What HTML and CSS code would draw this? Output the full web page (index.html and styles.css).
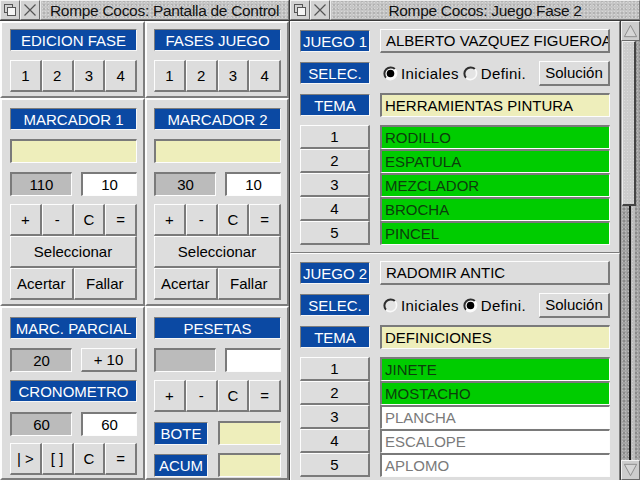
FILE: index.html
```html
<!DOCTYPE html>
<html lang="es">
<head>
<meta charset="utf-8">
<title>Rompe Cocos</title>
<link rel="stylesheet" href="styles.css">
</head>
<body>
<div class="desk">
  <section class="win win-left">
    <header class="titlebar">
      <span class="ticon"><svg width="18" height="18" viewBox="0 0 18 18"><rect x="3.5" y="3.5" width="8" height="8" fill="none" stroke="#555"/><rect x="6.5" y="6.5" width="8" height="8" fill="#f4f4f4" stroke="#555"/></svg></span>
      <span class="ticon"><svg width="18" height="18" viewBox="0 0 18 18"><path d="M3.5 3.5 L14.5 14.5 M14.5 3.5 L3.5 14.5" stroke="#555" stroke-width="1.2"/></svg></span>
      <span class="title">Rompe Cocos: Pantalla de Control</span>
    </header>
    <main class="control">
      <div class="cell r1 cl">
        <div class="label">EDICION FASE</div>
        <div class="btnrow mt9"><button class="btn">1</button><button class="btn">2</button><button class="btn">3</button><button class="btn">4</button></div>
      </div>
      <div class="cell r1 cr">
        <div class="label">FASES JUEGO</div>
        <div class="btnrow mt9"><button class="btn">1</button><button class="btn">2</button><button class="btn">3</button><button class="btn">4</button></div>
      </div>
      <div class="cell r2 cl">
        <div class="label">MARCADOR 1</div>
        <div class="field yellow mt9"></div>
        <div class="pair mt9"><div class="field grey">110</div><div class="field white">10</div></div>
        <div class="btnrow mt8"><button class="btn">+</button><button class="btn">-</button><button class="btn">C</button><button class="btn">=</button></div>
        <div class="btnrow"><button class="btn">Seleccionar</button></div>
        <div class="btnrow"><button class="btn">Acertar</button><button class="btn">Fallar</button></div>
      </div>
      <div class="cell r2 cr">
        <div class="label">MARCADOR 2</div>
        <div class="field yellow mt9"></div>
        <div class="pair mt9"><div class="field grey">30</div><div class="field white">10</div></div>
        <div class="btnrow mt8"><button class="btn">+</button><button class="btn">-</button><button class="btn">C</button><button class="btn">=</button></div>
        <div class="btnrow"><button class="btn">Seleccionar</button></div>
        <div class="btnrow"><button class="btn">Acertar</button><button class="btn">Fallar</button></div>
      </div>
      <div class="cell r3 cl">
        <div class="label">MARC. PARCIAL</div>
        <div class="pair mt9"><div class="field grey">20</div><button class="btn small">+ 10</button></div>
        <div class="label mt8">CRONOMETRO</div>
        <div class="pair mt10"><div class="field grey">60</div><div class="field white">60</div></div>
        <div class="btnrow mt7"><button class="btn">| &gt;</button><button class="btn">[ ]</button><button class="btn">C</button><button class="btn">=</button></div>
      </div>
      <div class="cell r3 cr">
        <div class="label">PESETAS</div>
        <div class="pair mt9"><div class="field grey"></div><div class="field white"></div></div>
        <div class="btnrow mt8"><button class="btn">+</button><button class="btn">-</button><button class="btn">C</button><button class="btn">=</button></div>
        <div class="tagpair mt9"><div class="label">BOTE</div><div class="field yellow"></div></div>
        <div class="tagpair mt8"><div class="label">ACUM</div><div class="field yellow"></div></div>
      </div>
    </main>
  </section>

  <section class="win win-right">
    <header class="titlebar">
      <span class="ticon"><svg width="18" height="18" viewBox="0 0 18 18"><rect x="3.5" y="3.5" width="8" height="8" fill="none" stroke="#555"/><rect x="6.5" y="6.5" width="8" height="8" fill="#f4f4f4" stroke="#555"/></svg></span>
      <span class="ticon"><svg width="18" height="18" viewBox="0 0 18 18"><path d="M3.5 3.5 L14.5 14.5 M14.5 3.5 L3.5 14.5" stroke="#555" stroke-width="1.2"/></svg></span>
      <span class="title">Rompe Cocos: Juego Fase 2</span>
    </header>
    <div class="rwork">
      <div class="games">
        <div class="game">
          <div class="grow"><div class="label lw">JUEGO 1</div><div class="name">ALBERTO VAZQUEZ FIGUEROA</div></div>
          <div class="grow">
            <div class="label lw">SELEC.</div>
            <div class="radios">
              <span class="radio"><svg width="15" height="15" viewBox="0 0 15 15"><circle cx="7.5" cy="7.5" r="6.3" fill="#fff"/><path d="M3.05 11.95 A6.3 6.3 0 0 1 11.95 3.05" stroke="#2e2e2e" stroke-width="2" fill="none"/><path d="M11.95 3.05 A6.3 6.3 0 0 1 3.05 11.95" stroke="#fafafa" stroke-width="1.6" fill="none"/><circle cx="7.5" cy="7.5" r="3.8" fill="#000"/></svg>Iniciales</span>
              <span class="radio"><svg width="15" height="15" viewBox="0 0 15 15"><circle cx="7.5" cy="7.5" r="6.3" fill="#e4e4e4"/><path d="M3.05 11.95 A6.3 6.3 0 0 1 11.95 3.05" stroke="#2e2e2e" stroke-width="2" fill="none"/><path d="M11.95 3.05 A6.3 6.3 0 0 1 3.05 11.95" stroke="#fafafa" stroke-width="1.6" fill="none"/></svg>Defini.</span>
            </div>
            <button class="btn sol">Solución</button>
          </div>
          <div class="grow"><div class="label lw">TEMA</div><div class="field yellow tema">HERRAMIENTAS PINTURA</div></div>
          <div class="list">
            <div class="lrow"><button class="btn nbtn">1</button><div class="word found">RODILLO</div></div>
            <div class="lrow"><button class="btn nbtn">2</button><div class="word found">ESPATULA</div></div>
            <div class="lrow"><button class="btn nbtn">3</button><div class="word found">MEZCLADOR</div></div>
            <div class="lrow"><button class="btn nbtn">4</button><div class="word found">BROCHA</div></div>
            <div class="lrow"><button class="btn nbtn">5</button><div class="word found">PINCEL</div></div>
          </div>
        </div>
        <div class="game">
          <div class="grow"><div class="label lw">JUEGO 2</div><div class="name">RADOMIR ANTIC</div></div>
          <div class="grow">
            <div class="label lw">SELEC.</div>
            <div class="radios">
              <span class="radio"><svg width="15" height="15" viewBox="0 0 15 15"><circle cx="7.5" cy="7.5" r="6.3" fill="#e4e4e4"/><path d="M3.05 11.95 A6.3 6.3 0 0 1 11.95 3.05" stroke="#2e2e2e" stroke-width="2" fill="none"/><path d="M11.95 3.05 A6.3 6.3 0 0 1 3.05 11.95" stroke="#fafafa" stroke-width="1.6" fill="none"/></svg>Iniciales</span>
              <span class="radio"><svg width="15" height="15" viewBox="0 0 15 15"><circle cx="7.5" cy="7.5" r="6.3" fill="#fff"/><path d="M3.05 11.95 A6.3 6.3 0 0 1 11.95 3.05" stroke="#2e2e2e" stroke-width="2" fill="none"/><path d="M11.95 3.05 A6.3 6.3 0 0 1 3.05 11.95" stroke="#fafafa" stroke-width="1.6" fill="none"/><circle cx="7.5" cy="7.5" r="3.8" fill="#000"/></svg>Defini.</span>
            </div>
            <button class="btn sol">Solución</button>
          </div>
          <div class="grow"><div class="label lw">TEMA</div><div class="field yellow tema">DEFINICIONES</div></div>
          <div class="list">
            <div class="lrow"><button class="btn nbtn">1</button><div class="word found">JINETE</div></div>
            <div class="lrow"><button class="btn nbtn">2</button><div class="word found">MOSTACHO</div></div>
            <div class="lrow"><button class="btn nbtn">3</button><div class="word">PLANCHA</div></div>
            <div class="lrow"><button class="btn nbtn">4</button><div class="word">ESCALOPE</div></div>
            <div class="lrow"><button class="btn nbtn">5</button><div class="word">APLOMO</div></div>
          </div>
        </div>
      </div>
      <div class="scrollbar">
        <div class="sarrow"><svg width="18" height="18" viewBox="0 0 18 18"><polygon points="9,3 15.5,15 2.5,15" fill="#d6d6d6" stroke="#8a8a8a"/></svg></div>
        <div class="track">
          <div class="thumb"></div>
          <div class="trough"></div>
        </div>
        <div class="sarrow"><svg width="18" height="18" viewBox="0 0 18 18"><polygon points="2.5,3 15.5,3 9,15" fill="#d6d6d6" stroke="#8a8a8a"/></svg></div>
      </div>
    </div>
  </section>
</div>
</body>
</html>
```

FILE: styles.css
```css
* { box-sizing: border-box; }
html, body { margin: 0; padding: 0; }
body {
  width: 640px;
  height: 480px;
  overflow: hidden;
  background: #3a3a3a;
  font-family: "Liberation Sans", Arial, sans-serif;
  font-size: 15px;
  color: #000;
}
.desk { display: flex; gap: 1px; width: 640px; height: 480px; }
.win { display: flex; flex-direction: column; height: 480px; background: #dddddd; overflow: hidden; }
.win-left { width: 289px; }
.win-right { width: 350px; }

/* title bar */
.titlebar { display: flex; flex: none; height: 21px; border-bottom: 1px solid #3a3a3a; }
.ticon {
  width: 20px; height: 20px; flex: none;
  display: flex; align-items: center; justify-content: center;
  background: #d2d2d2;
  border-style: solid; border-width: 1px;
  border-color: #f2f2f2 #6a6a6a #6a6a6a #f2f2f2;
}
.title {
  flex: 1;
  height: 20px;
  line-height: 19px;
  text-align: center;
  font-size: 15.5px;
  letter-spacing: -0.3px;
  white-space: nowrap;
  overflow: hidden;
  color: #111;
  background-color: #c6c6c6;
  background-image:
    radial-gradient(circle, #d8d8d8 35%, transparent 40%),
    radial-gradient(circle, #b2b2b2 30%, transparent 36%);
  background-size: 3px 3px, 4px 4px;
  background-position: 0 0, 1px 2px;
  border-style: solid; border-width: 1px;
  border-color: #ececec #777 #777 #ececec;
}

/* generic widgets */
.label {
  height: 22px;
  display: flex; align-items: center; justify-content: center;
  background: #0b49a3;
  color: #fff;
  white-space: nowrap;
  border: 1px solid;
  border-color: #7d7d7d #f6f6f6 #f6f6f6 #7d7d7d;
}
.btn {
  font: inherit;
  color: #000;
  margin: 0;
  padding: 0;
  background: #dddddd;
  border-style: solid;
  border-width: 1px 2px 2px 1px;
  border-color: #fdfdfd #7a7a7a #7a7a7a #fdfdfd;
  display: flex; align-items: center; justify-content: center;
  white-space: nowrap;
}
.field {
  height: 24px;
  display: flex; align-items: center; justify-content: center;
  border-style: solid;
  border-width: 2px 1px 1px 2px;
  border-color: #7a7a7a #fdfdfd #fdfdfd #7a7a7a;
  white-space: nowrap;
  overflow: hidden;
}
.yellow { background: #eeeebb; }
.grey { background: #bbbbbb; }
.white { background: #ffffff; }

.mt7 { margin-top: 7px; }
.mt8 { margin-top: 8px; }
.mt9 { margin-top: 9px; }
.mt10 { margin-top: 10px; }

/* control window */
.control {
  flex: 1;
  display: grid;
  grid-template-columns: 145px 144px;
  grid-template-rows: 77px 208px 174px;
}
.cell {
  display: flex; flex-direction: column;
  border-style: solid; border-width: 2px;
  border-color: #fdfdfd #7d7d7d #7d7d7d #fdfdfd;
  padding-right: 6px;
}
.cl { padding-left: 8px; }
.cr { padding-left: 7px; }
.r1 { padding-top: 6px; }
.r2 { padding-top: 8px; }
.r3 { padding-top: 9px; }
.btnrow { display: flex; height: 32px; }
.btnrow .btn { flex: 1; height: 32px; }
.pair { display: grid; grid-template-columns: 62px 56px; justify-content: space-between; }
.pair .btn { height: 24px; }
.tagpair { display: grid; grid-template-columns: 54px 63px; justify-content: space-between; align-items: center; }
.tagpair .label { height: 23px; }

/* game window */
.rwork { flex: 1; display: flex; min-height: 0; }
.games { width: 330px; display: flex; flex-direction: column; overflow: hidden; }
.game {
  flex: none;
  height: 232px;
  display: flex; flex-direction: column; gap: 8px;
  padding: 7px 9px 0 9px;
  border-style: solid; border-width: 1px;
  border-color: #fdfdfd #7d7d7d #7d7d7d #fdfdfd;
}
.grow { display: flex; align-items: center; height: 24px; gap: 10px; }
.lw { width: 70px; flex: none; }
.name {
  flex: 1; height: 24px;
  display: flex; align-items: center;
  padding-left: 5px;
  white-space: nowrap; overflow: hidden;
  background: #dddddd;
  border-style: solid; border-width: 1px 2px 2px 1px;
  border-color: #fdfdfd #7a7a7a #7a7a7a #fdfdfd;
}
.tema { flex: 1; justify-content: flex-start; padding-left: 3px; }
.radios { display: flex; align-items: center; gap: 4px; flex: 1; padding-left: 3px; }
.radio { display: flex; align-items: center; gap: 3px; letter-spacing: 0.4px; }
.radio svg { flex: none; }
.sol { width: 71px; height: 25px; }
.list { display: flex; flex-direction: column; }
.lrow { display: flex; height: 24px; gap: 10px; }
.nbtn { width: 70px; height: 24px; flex: none; }
.word {
  flex: 1;
  height: 24px;
  display: flex; align-items: center;
  padding-left: 3px;
  background: #fff;
  color: #7a7a7a;
  border-style: solid;
  border-width: 2px 1px 1px 2px;
  border-color: #7a7a7a #fdfdfd #fdfdfd #7a7a7a;
}
.word.found { background: #00cc00; color: #0c3d0c; }

/* scrollbar */
.scrollbar {
  width: 20px; flex: none;
  display: flex; flex-direction: column;
  border-left: 1px solid #3a3a3a;
}
.sarrow {
  height: 20px; flex: none;
  display: flex; align-items: center; justify-content: center;
  background: #cdcdcd;
  border-style: solid; border-width: 1px;
  border-color: #f2f2f2 #6a6a6a #6a6a6a #f2f2f2;
}
.track {
  flex: 1;
  display: flex; flex-direction: column;
  background-color: #a4a4a4;
  background-image:
    radial-gradient(circle, #bdbdbd 35%, transparent 40%),
    radial-gradient(circle, #8a8a8a 30%, transparent 36%);
  background-size: 3px 3px, 4px 4px;
  background-position: 0 0, 1px 2px;
}
.thumb {
  height: 165px; flex: none;
  margin: 0 4px 0 1px;
  background-color: #cccccc;
  background-image: radial-gradient(circle, #dcdcdc 35%, transparent 40%);
  background-size: 3px 3px;
  border-style: solid; border-width: 1px 2px 2px 1px;
  border-color: #eeeeee #444 #444 #eeeeee;
}
.trough {
  flex: 1;
  margin-left: 8px;
  width: 6px;
  border-left: 2px solid #1a1a1a;
  background-color: #bcbcbc;
  background-image: radial-gradient(circle, #d0d0d0 35%, transparent 40%);
  background-size: 3px 3px;
}
```
